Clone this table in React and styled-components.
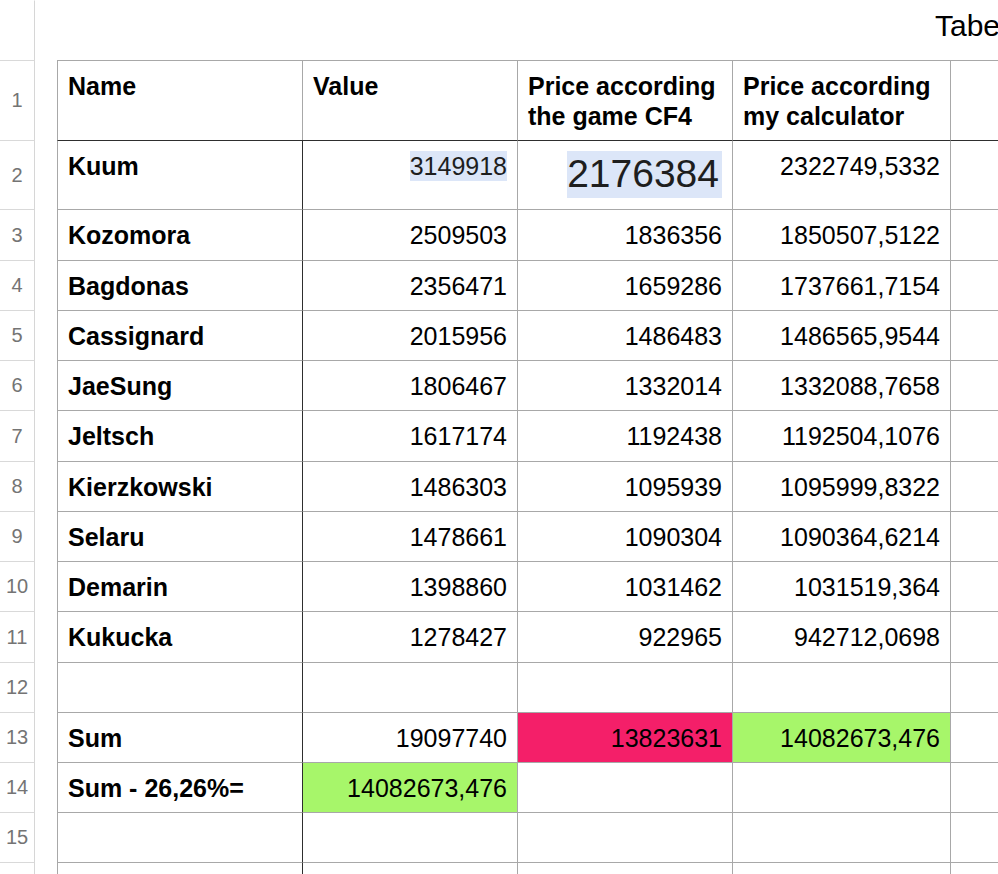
import styled, { createGlobalStyle } from 'styled-components';

const GlobalStyle = createGlobalStyle`
  html, body {
    margin: 0;
    padding: 0;
    background: #fff;
  }
  body {
    font-family: "Liberation Sans", Arial, Helvetica, sans-serif;
    overflow: hidden;
  }
`;

const Sheet = styled.div`
  width: 998px;
  height: 874px;
  overflow: hidden;
  display: flex;
  flex-direction: column;
`;

const Line = styled.div`
  display: flex;
  flex: none;
  height: ${(p) => p.$h}px;
`;

const Gutter = styled.div`
  box-sizing: border-box;
  width: 35px;
  flex: none;
  height: 100%;
  border-right: 1px solid #d6d6d6;
  border-top: 1px solid ${(p) => (p.$blank ? 'transparent' : '#d9d9d9')};
  display: flex;
  align-items: center;
  justify-content: center;
  color: #747474;
  font-size: 20px;
`;

const Spacer = styled.div`
  width: 22px;
  flex: none;
`;

const Title = styled.div`
  flex: 1;
  padding: 8px 0 0 900px;
  font-size: 30px;
  line-height: 36px;
  color: #000;
  white-space: nowrap;
`;

const Cell = styled.div`
  box-sizing: border-box;
  width: ${(p) => (p.$w ? `${p.$w}px` : 'auto')};
  flex: ${(p) => (p.$w ? 'none' : '1 0 auto')};
  height: 100%;
  border-top: 1px solid ${(p) => (p.$darkTop ? '#2e2e2e' : '#a8a8a8')};
  border-left: 1px solid ${(p) => (p.$darkLeft ? '#2e2e2e' : '#a8a8a8')};
  background: ${(p) => p.$bg || 'transparent'};
  padding: 10px 10px 0 10px;
  font-size: 25px;
  line-height: 30px;
  font-weight: ${(p) => (p.$bold ? 700 : 400)};
  text-align: ${(p) => (p.$num ? 'right' : 'left')};
  color: #000;
  white-space: nowrap;
`;

const Selected = styled.span`
  display: inline-block;
  vertical-align: top;
  background: #dce6f8;
  color: #1e1e1e;
  font-size: ${(p) => p.$size}px;
  line-height: 1.2;
  padding-right: ${(p) => (p.$size > 30 ? 3 : 0)}px;
`;

const RED = '#f41f69';
const GREEN = '#a7f66a';

const cols = [245, 215, 215, 218];

const players = [
  ['Kozomora', '2509503', '1836356', '1850507,5122'],
  ['Bagdonas', '2356471', '1659286', '1737661,7154'],
  ['Cassignard', '2015956', '1486483', '1486565,9544'],
  ['JaeSung', '1806467', '1332014', '1332088,7658'],
  ['Jeltsch', '1617174', '1192438', '1192504,1076'],
  ['Kierzkowski', '1486303', '1095939', '1095999,8322'],
  ['Selaru', '1478661', '1090304', '1090364,6214'],
  ['Demarin', '1398860', '1031462', '1031519,364'],
  ['Kukucka', '1278427', '922965', '942712,0698'],
];

// heights measured from one grid line to the next
const playerHeights = [51, 50, 50, 50, 51, 50, 50, 50, 51];

function Row({ n, h, children }) {
  return (
    <Line $h={h}>
      <Gutter>{n}</Gutter>
      <Spacer />
      {children}
    </Line>
  );
}

function DataRow({ n, h, cells = [], bgs = [] }) {
  return (
    <Row n={n} h={h}>
      <Cell $w={cols[0]} $bold>{cells[0]}</Cell>
      <Cell $w={cols[1]} $num $darkLeft $bg={bgs[1]}>{cells[1]}</Cell>
      <Cell $w={cols[2]} $num $bg={bgs[2]}>{cells[2]}</Cell>
      <Cell $w={cols[3]} $num $bg={bgs[3]}>{cells[3]}</Cell>
      <Cell />
    </Row>
  );
}

export default function App() {
  return (
    <>
      <GlobalStyle />
      <Sheet>
        <Line $h={60}>
          <Gutter $blank />
          <Title>Tabelle 1</Title>
        </Line>

        <Row n={1} h={80}>
          <Cell $w={cols[0]} $bold>Name</Cell>
          <Cell $w={cols[1]} $bold>Value</Cell>
          <Cell $w={cols[2]} $bold>
            Price according
            <br />
            the game CF4
          </Cell>
          <Cell $w={cols[3]} $bold>
            Price according
            <br />
            my calculator
          </Cell>
          <Cell />
        </Row>

        <Row n={2} h={69}>
          <Cell $w={cols[0]} $bold $darkTop>Kuum</Cell>
          <Cell $w={cols[1]} $num $darkTop $darkLeft>
            <Selected $size={25}>3149918</Selected>
          </Cell>
          <Cell $w={cols[2]} $num $darkTop>
            <Selected $size={39}>2176384</Selected>
          </Cell>
          <Cell $w={cols[3]} $num $darkTop>2322749,5332</Cell>
          <Cell $darkTop />
        </Row>

        {players.map((p, i) => (
          <DataRow key={p[0]} n={i + 3} h={playerHeights[i]} cells={p} />
        ))}

        <DataRow n={12} h={50} />
        <DataRow
          n={13}
          h={50}
          cells={['Sum', '19097740', '13823631', '14082673,476']}
          bgs={[null, null, RED, GREEN]}
        />
        <DataRow
          n={14}
          h={50}
          cells={['Sum - 26,26%=', '14082673,476']}
          bgs={[null, GREEN]}
        />
        <DataRow n={15} h={50} />
        <DataRow h={50} />
      </Sheet>
    </>
  );
}
